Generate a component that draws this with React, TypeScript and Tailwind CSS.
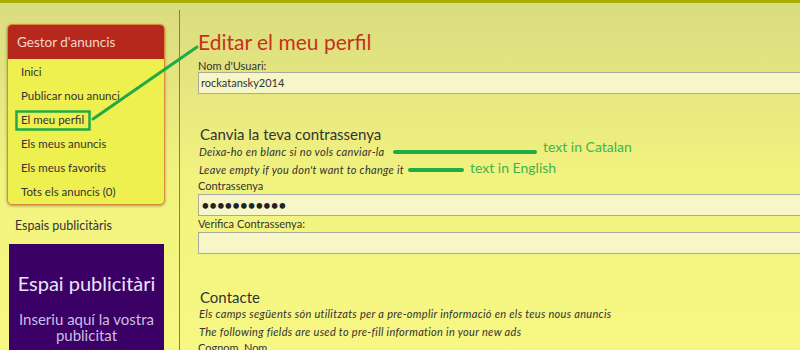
const menu = [
  'Inici',
  'Publicar nou anunci',
  'El meu perfil',
  'Els meus anuncis',
  'Els meus favorits',
  'Tots els anuncis (0)',
];

const Field = ({ children }: { children?: React.ReactNode }) => (
  <div className="h-[22px] w-[620px] border border-[#a9a99c] bg-[#f6f6c8] pl-[2px] text-[11px] leading-[20px] text-[#333]">
    {children}
  </div>
);

export default function App() {
  return (
    <div
      className="relative h-[350px] w-[800px] overflow-hidden bg-gradient-to-b from-[#d9db80] via-[#f2f27f] to-[#f7f784] text-[#333]"
      style={{ fontFamily: 'Lato, "Open Sans", sans-serif' }}
    >
      <div className="h-[3px] bg-[#a9ae00]" />
      <div className="flex">
        <aside className="w-[179px] shrink-0 pl-[7px]">
          <div className="mt-[21px] w-[158px] overflow-hidden rounded-[5px] border border-[#d88a3a] bg-[#eef050] shadow-[0_1px_3px_rgba(0,0,0,0.35)]">
            <div className="h-[34px] bg-[#b5281b] pl-[9px] text-[13.5px] leading-[34px] text-[#f3d6cc]">
              Gestor d'anuncis
            </div>
            <ul className="pt-[1px]">
              {menu.map((m) => (
                <li key={m} className="h-[24px] pl-[13px] text-[11.5px] leading-[24px] text-[#333]">
                  {m}
                </li>
              ))}
            </ul>
          </div>
          <div className="mt-[12px] pl-[8px] text-[12.5px] leading-[18px]">Espais publicitàris</div>
          <div className="ml-[2px] mt-[9px] h-[120px] w-[155px] bg-[#3a0066] pt-[26px] text-center">
            <div className="text-[20px] leading-[26px] text-[#ece4f4]">Espai publicitàri</div>
            <div className="mt-[15px] text-[15px] leading-[16px] text-[#cdbde2]">Inseriu aquí la vostra</div>
            <div className="text-[15px] leading-[16px] text-[#cdbde2]">publicitat</div>
          </div>
        </aside>
        <div className="mt-[7px] h-[340px] w-px shrink-0 bg-[#c4642e]" />
        <main className="flex-1 pl-[18px]">
          <h1 className="mt-[26px] text-[21px] leading-[26px] text-[#c8301c]">Editar el meu perfil</h1>
          <div className="mt-[5px] text-[11px] leading-[12px]">Nom d'Usuari:</div>
          <Field>rockatansky2014</Field>
          <h2 className="mt-[31px] pl-[2px] text-[15px] leading-[18px]">Canvia la teva contrassenya</h2>
          <p className="pl-[1px] text-[11px] italic leading-[18px] tracking-[0.3px]">
            Deixa-ho en blanc si no vols canviar-la
          </p>
          <p className="pl-[1px] text-[11px] italic leading-[18px] tracking-[0.3px]">
            Leave empty if you don't want to change it
          </p>
          <div className="text-[11px] leading-[14px]">Contrassenya</div>
          <div className="mt-[1px]">
            <Field>
              <span className="text-[15px] leading-[20px] tracking-[-1px] text-[#222]">•••••••••••</span>
            </Field>
          </div>
          <div className="mt-[1px] text-[11px] leading-[14px]">Verifica Contrassenya:</div>
          <div className="mt-[1px]">
            <Field />
          </div>
          <h2 className="mt-[35px] pl-[2px] text-[15px] leading-[16px]">Contacte</h2>
          <p className="whitespace-nowrap pl-[1px] text-[11px] italic leading-[18px] tracking-[0.3px]">
            Els camps següents són utilitzats per a pre-omplir informació en els teus nous anuncis
          </p>
          <p className="pl-[1px] text-[11px] italic leading-[18px] tracking-[0.3px]">
            The following fields are used to pre-fill information in your new ads
          </p>
          <div className="text-[11px] leading-[14px]">Cognom, Nom</div>
        </main>
      </div>

      <svg className="pointer-events-none absolute inset-0" width="800" height="350">
        <line x1="93" y1="119" x2="197" y2="47" stroke="#22aa44" strokeWidth="3" strokeLinecap="round" />
        <rect x="16.5" y="111.5" width="73" height="18" fill="none" stroke="#22aa44" strokeWidth="2.5" />
        <line x1="395" y1="152" x2="535" y2="152" stroke="#22aa44" strokeWidth="4" strokeLinecap="round" />
        <line x1="410" y1="170" x2="462" y2="170" stroke="#22aa44" strokeWidth="4" strokeLinecap="round" />
      </svg>
      <div className="pointer-events-none absolute left-[543px] top-[137px] text-[14px] leading-[20px] text-[#3db54a]">
        text in Catalan
      </div>
      <div className="pointer-events-none absolute left-[470px] top-[158px] text-[14px] leading-[20px] text-[#3db54a]">
        text in English
      </div>
    </div>
  );
}
